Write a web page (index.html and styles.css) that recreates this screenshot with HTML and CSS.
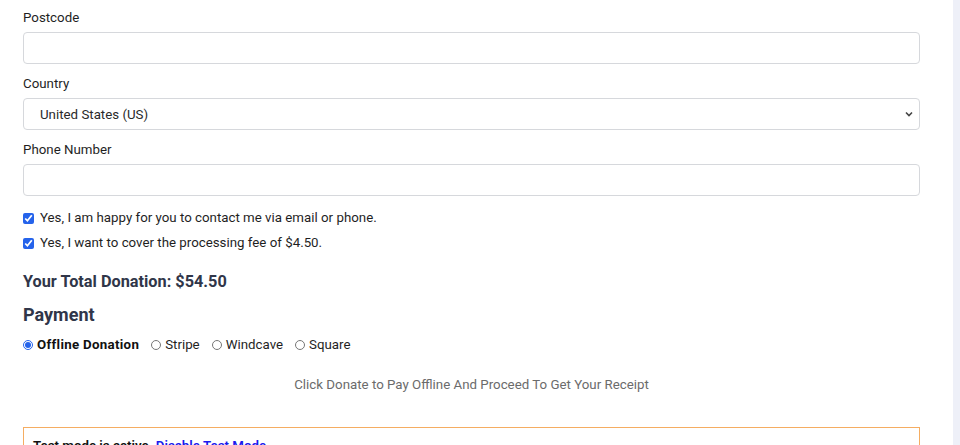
FILE: index.html
```html
<!DOCTYPE html>
<html>
	<head>
		<meta charset="utf-8">
		<title>Donation</title>
		<link rel="stylesheet" href="styles.css">
	</head>
	<body>
		<div class="page">
			<div class="donate-form">
				<div class="field">
					<label class="field-label" for="postcode">Postcode</label>
					<input class="field-input" type="text" id="postcode">
				</div>
				<div class="field">
					<label class="field-label" for="country">Country</label>
					<div class="select-wrap">
						<select class="field-input field-select" id="country">
							<option>United States (US)</option>
						</select>
						<svg class="select-arrow" width="8" height="6" viewBox="0 0 8 6">
							<path d="M1 1.5 L4 4.5 L7 1.5" fill="none" stroke="#444" stroke-width="1.6"/>
						</svg>
					</div>
				</div>
				<div class="field">
					<label class="field-label" for="phone">Phone Number</label>
					<input class="field-input" type="text" id="phone">
				</div>

				<div class="checks">
					<label class="check"><input type="checkbox" checked> Yes, I am happy for you to contact me via email or phone.</label>
					<label class="check"><input type="checkbox" checked> Yes, I want to cover the processing fee of $4.50.</label>
				</div>

				<h3 class="total">Your Total Donation: $54.50</h3>

				<h2 class="pay-title">Payment</h2>
				<div class="gateways">
					<label class="gateway gateway-active"><input type="radio" name="gw" checked> Offline Donation</label>
					<label class="gateway"><input type="radio" name="gw"> Stripe</label>
					<label class="gateway"><input type="radio" name="gw"> Windcave</label>
					<label class="gateway"><input type="radio" name="gw"> Square</label>
				</div>

				<p class="offline-note">Click Donate to Pay Offline And Proceed To Get Your Receipt</p>

				<div class="test-notice">
					Test mode is active. <a href="#">Disable Test Mode</a>
				</div>
			</div>
			<div class="sidebar"></div>
		</div>
	</body>
</html>
```

FILE: styles.css
```css
html, body {
	margin: 0;
	padding: 0;
}

body {
	font-family: Roboto, "Noto Sans", sans-serif;
	font-size: 13.3px;
	color: #1f1f1f;
	background: #ffffff;
	overflow: hidden;
}

.page {
	display: flex;
	height: 445px;
}

.donate-form {
	width: 897px;
	padding: 8px 33px 0 23px;
	background: #ffffff;
}

.sidebar {
	flex: 1;
	background: #eef0f8;
}

.field {
	display: flex;
	flex-direction: column;
	margin-bottom: 10px;
}

.field-label {
	line-height: 20px;
	margin-bottom: 4px;
}

.field-input {
	box-sizing: border-box;
	width: 100%;
	height: 32px;
	border: 1px solid #d6d8dc;
	border-radius: 4px;
	background: #fff;
	font-family: inherit;
	font-size: 13.3px;
	color: #2a2a2a;
	padding: 0 16px;
	margin: 0;
	outline: none;
}

.select-wrap {
	position: relative;
}

.field-select {
	appearance: none;
	-webkit-appearance: none;
	display: block;
}

.select-arrow {
	position: absolute;
	right: 7px;
	top: 13px;
}

.checks {
	margin-top: 12px;
}

.check {
	display: flex;
	align-items: center;
	line-height: 20px;
	margin-bottom: 5px;
}

.check input {
	width: 11px;
	height: 11px;
	margin: 0 6px 0 0;
	accent-color: #2563eb;
}

.total {
	margin: 17px 0 0;
	font-size: 16.3px;
	line-height: 24px;
	font-weight: 700;
	color: #303649;
}

.pay-title {
	margin: 8px 0 0;
	font-size: 18px;
	line-height: 26px;
	font-weight: 700;
	color: #303649;
}

.gateways {
	display: flex;
	gap: 12px;
	margin-top: 7px;
}

.gateway {
	display: flex;
	align-items: center;
	line-height: 20px;
}

.gateway input {
	width: 10px;
	height: 10px;
	margin: 0 4px 0 0;
	accent-color: #2563eb;
}

.gateway-active {
	font-weight: 700;
	letter-spacing: 0.3px;
	color: #111;
}

.offline-note {
	margin: 20px 0 0;
	text-align: center;
	line-height: 20px;
	color: #6b6b6b;
}

.test-notice {
	margin-top: 32px;
	border: 1px solid #f5ad62;
	padding: 8px 9px;
	line-height: 20px;
	font-weight: 600;
	color: #111;
}

.test-notice a {
	color: #1a1aee;
	text-decoration: none;
}
```
